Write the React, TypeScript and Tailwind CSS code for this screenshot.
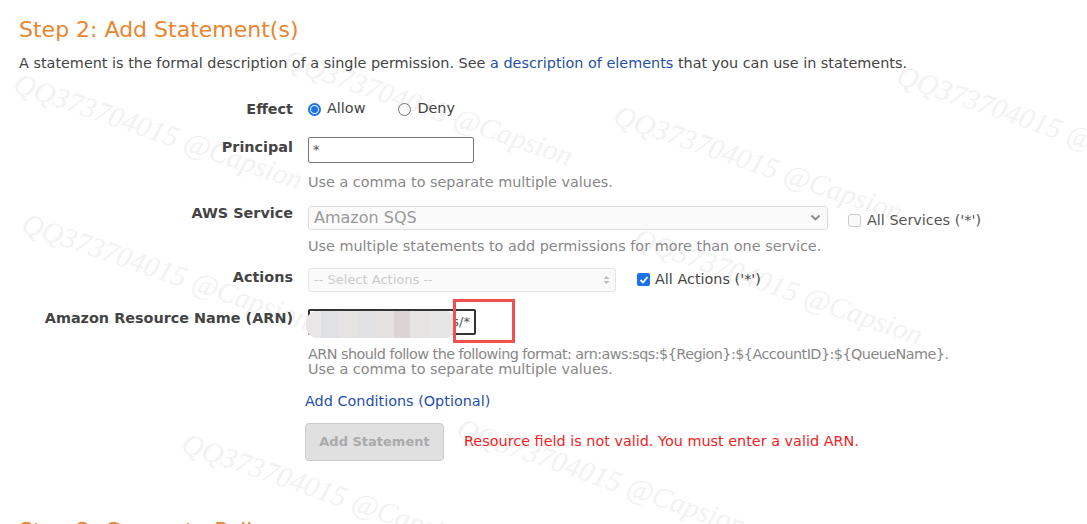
import React from "react";

const font = { fontFamily: '"DejaVu Sans", Verdana, sans-serif' };

function Watermark({ x, y }: { x: number; y: number }) {
  return (
    <div
      className="absolute pointer-events-none select-none whitespace-nowrap text-[29px] italic text-[#f2f2f2] origin-top-left rotate-[19deg] font-['Liberation_Serif',serif]"
      style={{ left: x, top: y }}
      aria-hidden="true"
    >
      QQ373704015 @Capsion
    </div>
  );
}

function Row({
  label,
  labelPad = 0,
  mt,
  children,
}: {
  label?: string;
  labelPad?: number;
  mt: string;
  children: React.ReactNode;
}) {
  return (
    <div className={`flex items-start ${mt}`}>
      <div
        className="w-[274px] shrink-0 text-right font-bold text-[14.4px] leading-[18px] text-[#444]"
        style={{ paddingTop: labelPad }}
      >
        {label}
      </div>
      <div className="ml-[15px] flex-1">{children}</div>
    </div>
  );
}

function Help({ children, tight }: { children: React.ReactNode; tight?: boolean }) {
  return (
    <div className={`text-[14.4px] text-[#888] leading-[15px] whitespace-nowrap ${tight ? "tracking-[-0.55px]" : ""}`}>
      {children}
    </div>
  );
}

export default function App() {
  const marks = [
    [22, 62], [292, 38], [622, 94], [905, 54], [30, 202], [642, 217], [190, 422], [465, 407],
  ];
  return (
    <div className="relative w-[1087px] h-[524px] overflow-hidden bg-white" style={font}>
      {marks.map(([x, y], i) => (
        <Watermark key={i} x={x} y={y} />
      ))}
      <div className="relative pl-[19px] pt-[16px]">
        <h2 className="text-[22px] text-[#e8862f] leading-[28px]">Step 2: Add Statement(s)</h2>
        <p className="mt-[10px] text-[14.4px] text-[#444] leading-[18px] whitespace-nowrap">
          A statement is the formal description of a single permission. See{" "}
          <span className="text-[#1f4fa8]">a description of elements</span> that you can use in statements.
        </p>

        {/* Effect */}
        <Row label="Effect" mt="mt-[27px]" labelPad={1}>
          <div className="flex items-center text-[14.4px] text-[#444] h-[20px]">
            <span className="w-[13px] h-[13px] rounded-full border-2 border-[#1a73e8] flex items-center justify-center">
              <span className="w-[7px] h-[7px] rounded-full bg-[#1a73e8]" />
            </span>
            <span className="ml-[6px]">Allow</span>
            <span className="ml-[33px] w-[13px] h-[13px] rounded-full border border-[#767676]" />
            <span className="ml-[6px]">Deny</span>
          </div>
        </Row>

        {/* Principal */}
        <Row label="Principal" mt="mt-[18px]" labelPad={1}>
          <div className="w-[166px] h-[26px] border border-[#767676] rounded-[2px] px-[4px] text-[13px] text-[#555] leading-[24px]">*</div>
          <div className="mt-[12px]"><Help>Use a comma to separate multiple values.</Help></div>
        </Row>

        {/* AWS Service */}
        <Row label="AWS Service" mt="mt-[14px]" labelPad={0}>
          <div className="flex items-center">
            <div className="w-[520px] h-[24px] border border-[#ddd] rounded-[3px] bg-[#fafafa] flex items-center justify-between pl-[5px] pr-[6px] text-[16px] text-[#999]">
              <span>Amazon SQS</span>
              <svg width="11" height="8" viewBox="0 0 11 8"><path d="M1.5 1.5 L5.5 5.5 L9.5 1.5" stroke="#888" strokeWidth="1.8" fill="none" /></svg>
            </div>
            <span className="ml-[20px] mt-[6px] w-[13px] h-[13px] rounded-[3px] border border-[#ccc] bg-[#fafafa]" />
            <span className="ml-[6px] mt-[6px] text-[14.4px] text-[#555]">All Services ('*')</span>
          </div>
          <div className="mt-[7px]"><Help>Use multiple statements to add permissions for more than one service.</Help></div>
        </Row>

        {/* Actions */}
        <Row label="Actions" mt="mt-[14px]" labelPad={0}>
          <div className="flex items-center">
            <div className="w-[308px] h-[24px] border border-[#e4e4e4] rounded-[3px] bg-[#fafafa] flex items-center justify-between px-[5px] text-[13px] text-[#ccc]">
              <span>-- Select Actions --</span>
              <svg width="7" height="10" viewBox="0 0 7 10"><path d="M0.5 4 L3.5 1 L6.5 4 Z M0.5 6 L3.5 9 L6.5 6 Z" fill="#bbb" /></svg>
            </div>
            <span className="ml-[21px] w-[13px] h-[13px] rounded-[2px] bg-[#1a73e8] flex items-center justify-center">
              <svg width="10" height="10" viewBox="0 0 10 10"><path d="M1.5 5 L4 7.5 L8.5 2" stroke="white" strokeWidth="1.8" fill="none" /></svg>
            </span>
            <span className="ml-[5px] text-[14.4px] text-[#444]">All Actions ('*')</span>
          </div>
        </Row>

        {/* ARN */}
        <Row label="Amazon Resource Name (ARN)" mt="mt-[17px]" labelPad={0}>
          <div className="relative w-[168px] h-[26px] border-2 border-[#333] rounded-[2px] flex items-center justify-end pr-[4px] text-[13px] text-[#555]">
            <span>ls/*</span>
            <div className="absolute left-[-4px] top-[0px] w-[150px] h-[27px] rounded-[12px] bg-[#e4e4e4] flex overflow-hidden">
              <span className="w-[15px] bg-[#e8e6e6]" />
              <span className="w-[18px] bg-[#dfe1e4]" />
              <span className="w-[18px] bg-[#e6e3e3]" />
              <span className="w-[20px] bg-[#e2e2e4]" />
              <span className="w-[17px] bg-[#e7e2e2]" />
              <span className="w-[16px] bg-[#dcd4d4]" />
              <span className="w-[20px] bg-[#e6e3e3]" />
              <span className="flex-1 bg-[#e6e6e6]" />
            </div>
            <div className="absolute left-[143px] top-[-12px] w-[62px] h-[44px] border-[3px] border-[#f05050]" />
          </div>
          <div className="mt-[12px]">
            <Help tight>ARN should follow the following format: arn:aws:sqs:${"{Region}"}:${"{AccountID}"}:${"{QueueName}"}.</Help>
            <Help>Use a comma to separate multiple values.</Help>
          </div>
          <div className="mt-[15px] -ml-[3px] text-[14.4px] leading-[18px] text-[#1f4fa8]">Add Conditions (Optional)</div>
          <div className="mt-[13px] -ml-[3px] flex items-center">
            <div className="w-[139px] h-[38px] rounded-[4px] border border-[#ccc] bg-[#e0e0e0] flex items-center justify-center text-[13px] font-bold text-[#aaa]">
              Add Statement
            </div>
            <span className="ml-[20px] text-[14.4px] text-[#f01e1e]">Resource field is not valid. You must enter a valid ARN.</span>
          </div>
        </Row>

        <h2 className="mt-[56px] text-[22px] text-[#e8862f] leading-[28px]">Step 3: Generate Policy</h2>
      </div>
    </div>
  );
}
